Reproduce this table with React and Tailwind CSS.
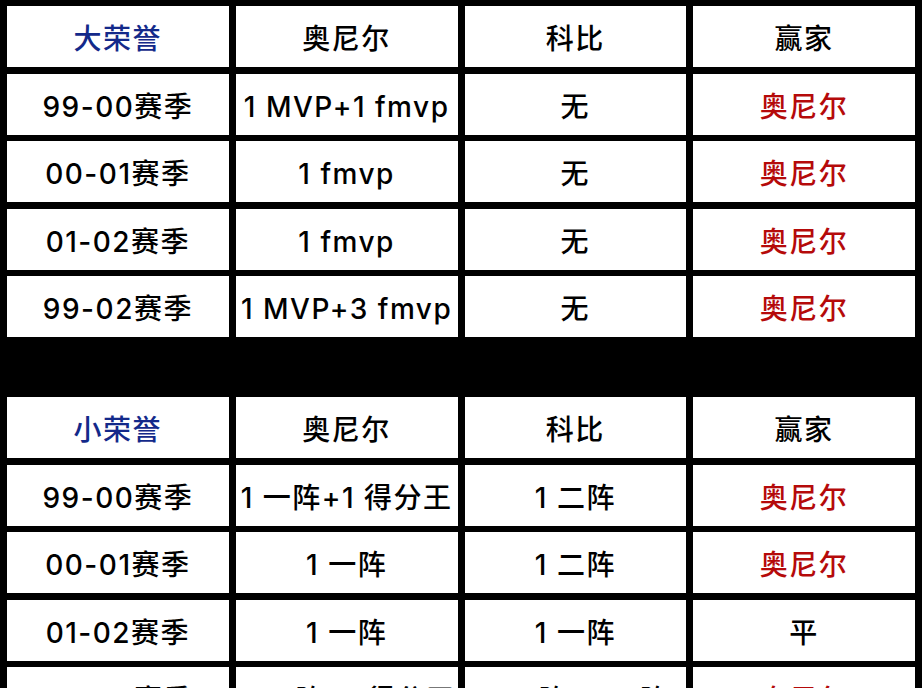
import React from "react";

const top = [
  ["99-00赛季", "1 MVP+1 fmvp", "无", "奥尼尔"],
  ["00-01赛季", "1 fmvp", "无", "奥尼尔"],
  ["01-02赛季", "1 fmvp", "无", "奥尼尔"],
  ["99-02赛季", "1 MVP+3 fmvp", "无", "奥尼尔"],
];
const bottom = [
  ["99-00赛季", "1 一阵+1 得分王", "1 二阵", "奥尼尔"],
  ["00-01赛季", "1 一阵", "1 二阵", "奥尼尔"],
  ["01-02赛季", "1 一阵", "1 一阵", "平"],
  ["99-02赛季", "3 一阵+1 得分王", "2 二阵+1 一阵", "奥尼尔"],
];

function Cell({ children, className = "" }) {
  return (
    <div className={"h-[61px] bg-white flex items-center justify-center pt-[5px] text-[28px] font-medium tracking-[1.5px] leading-none whitespace-nowrap overflow-hidden " + className}>
      {children}
    </div>
  );
}

function Table({ title, rows }) {
  return (
    <div className="grid grid-cols-4 gap-x-[7px] gap-y-[6.5px]">
      <Cell className="text-[#13298a]">{title}</Cell>
      <Cell className="text-black">奥尼尔</Cell>
      <Cell className="text-black">科比</Cell>
      <Cell className="text-black">赢家</Cell>
      {rows.map((r, i) => (
        <React.Fragment key={i}>
          <Cell className="text-black">{r[0]}</Cell>
          <Cell className="text-black">{r[1]}</Cell>
          <Cell className="text-black">{r[2]}</Cell>
          <Cell className={r[3] === "平" ? "text-black" : "text-[#b50a0a]"}>{r[3]}</Cell>
        </React.Fragment>
      ))}
    </div>
  );
}

export default function App() {
  return (
    <div
      className="w-[922px] h-[688px] bg-black overflow-hidden px-[7px] pt-[6px] flex flex-col gap-[60px]"
      style={{ fontFamily: 'Inter, "Noto Sans CJK SC", sans-serif' }}
    >
      <Table title="大荣誉" rows={top} />
      <Table title="小荣誉" rows={bottom} />
    </div>
  );
}
